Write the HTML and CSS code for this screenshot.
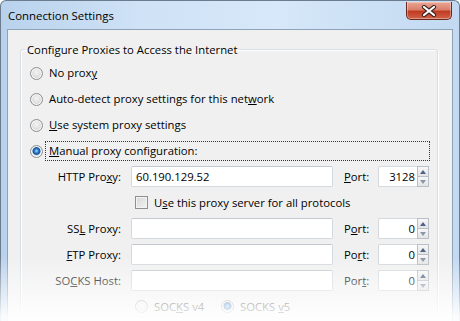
FILE: index.html
```html
<!DOCTYPE html>
<html lang="en">
<head>
  <meta charset="UTF-8" />
  <title>Connection Settings</title>
  <link rel="stylesheet" href="styles.css">
</head>
<body>
  <div class="window">
    <div class="titlebar">
      <span class="title">Connection Settings</span>
      <div class="close">
        <svg width="16" height="12" viewBox="0 0 16 12">
          <path d="M3 2 L13 10 M13 2 L3 10" stroke="#3b2320" stroke-width="4.2" stroke-linecap="round" fill="none"/>
          <path d="M3 2 L13 10 M13 2 L3 10" stroke="#ffffff" stroke-width="2.2" stroke-linecap="round" fill="none"/>
        </svg>
      </div>
    </div>

    <div class="client">
      <fieldset class="group">
        <legend>Configure Proxies to Access the Internet</legend>

        <div class="choice"><span class="radio"></span><span class="choice-label">No prox<u>y</u></span></div>
        <div class="choice"><span class="radio"></span><span class="choice-label">Auto-detect proxy settings for this net<u>w</u>ork</span></div>
        <div class="choice"><span class="radio"></span><span class="choice-label"><u>U</u>se system proxy settings</span></div>
        <div class="choice"><span class="radio on"></span><span class="choice-label focus"><u>M</u>anual proxy configuration:</span></div>

        <div class="proxy-grid">
          <span class="name">HTTP Pro<u>x</u>y:</span>
          <div class="field">60.190.129.52</div>
          <span class="port-label"><u>P</u>ort:</span>
          <div class="spin"><div class="num">3128</div><div class="arrows"><span class="up"></span><span class="down"></span></div></div>

          <div class="all"><span class="check"></span><span>U<u>s</u>e this proxy server for all protocols</span></div>

          <span class="name">SS<u>L</u> Proxy:</span>
          <div class="field"></div>
          <span class="port-label">P<u>o</u>rt:</span>
          <div class="spin"><div class="num">0</div><div class="arrows"><span class="up"></span><span class="down"></span></div></div>

          <span class="name"><u>F</u>TP Proxy:</span>
          <div class="field"></div>
          <span class="port-label">Po<u>r</u>t:</span>
          <div class="spin"><div class="num">0</div><div class="arrows"><span class="up"></span><span class="down"></span></div></div>

          <span class="name">SO<u>C</u>KS Host:</span>
          <div class="field"></div>
          <span class="port-label">Por<u>t</u>:</span>
          <div class="spin"><div class="num">0</div><div class="arrows"><span class="up"></span><span class="down"></span></div></div>

          <div class="socks">
            <span class="opt"><span class="radio"></span><span>SOC<u>K</u>S v4</span></span>
            <span class="opt"><span class="radio on"></span><span>SOCKS <u>v</u>5</span></span>
          </div>
        </div>
      </fieldset>
    </div>

    <!-- fondo desvanecido -->
    <div class="fade"></div>
  </div>
</body>
</html>
```

FILE: styles.css
```css
body {
  margin: 0;
  overflow: hidden;
  font-family: "Open Sans", "Noto Sans", sans-serif;
  font-size: 11.3px;
  color: #000;
}

.window {
  position: relative;
  width: 458px;
  height: 330px;
  border: 1px solid #6b7c8f;
  border-bottom: none;
  border-radius: 6px 6px 0 0;
  background: linear-gradient(to right, #b9d2ec, #cfe2f6 30%, #d6e8f9 60%, #c2d9f1);
  display: flex;
  flex-direction: column;
}

.titlebar {
  height: 28px;
  display: flex;
  justify-content: space-between;
  align-items: flex-start;
  padding: 0 7px;
}

.title {
  font-size: 11.4px;
  line-height: 29px;
  color: #000;
}

.close {
  margin-top: 1px;
  width: 44px;
  height: 17px;
  border: 1px solid #6a2a20;
  border-top: none;
  border-radius: 0 0 5px 5px;
  background: linear-gradient(#eba594, #d9806b 45%, #c23a22 55%, #cf6348);
  box-shadow: inset 0 0 0 1px rgba(255, 255, 255, 0.35);
  display: flex;
  justify-content: center;
  align-items: center;
}

.client {
  flex: 1;
  margin: 0 6px;
  background: #f0f0f0;
  border: 1px solid #8ea2b8;
  border-bottom: none;
  padding: 12px 14px 0 12px;
}

.group {
  margin: 0;
  padding: 3px 0 0 0;
  border: 1px solid #d5dfe5;
  border-radius: 3px;
  box-shadow: inset 1px 1px #fff, 1px 1px #fff;
}

.group legend {
  margin-left: 4px;
  padding: 0 2px;
  font-size: 11.3px;
  line-height: 15px;
}

.choice {
  height: 26px;
  display: flex;
  align-items: center;
  padding: 0 7px 0 9px;
}

.radio {
  flex: none;
  width: 11px;
  height: 11px;
  border-radius: 50%;
  border: 1px solid #8c8f93;
  background: radial-gradient(circle at 50% 40%, #f4f4f4, #d8d8d8 70%, #cfcfcf);
  box-shadow: inset 0 0 0 1px #f8f8f8;
}

.radio.on {
  background: radial-gradient(circle at 50% 45%, #a9dcff 0, #2a7fd0 2px, #1b4f8a 3.5px, #d8e6f2 4.5px, #e6e6e6 100%);
}

.choice-label {
  margin-left: 2px;
  padding: 0 3px;
  height: 18px;
  line-height: 18px;
  border: 1px dotted transparent;
}

.choice-label.focus {
  flex: 1;
  border-color: #333;
}

.proxy-grid {
  margin-top: 2px;
  display: grid;
  grid-template-columns: 100px 202px 25px 51px;
  grid-auto-rows: 21px;
  column-gap: 10px;
  row-gap: 5px;
  align-items: center;
}

.name {
  text-align: right;
  white-space: nowrap;
}

.port-label {
  white-space: nowrap;
  padding-left: 1px;
}

.field {
  height: 19px;
  border: 1px solid #d4d9de;
  border-top-color: #c3c9cf;
  border-radius: 2px;
  background: #fff;
  padding-left: 4px;
  line-height: 19px;
}

.spin {
  display: flex;
  height: 21px;
}

.num {
  width: 36px;
  border: 1px solid #d4d9de;
  border-right: none;
  border-radius: 2px 0 0 2px;
  background: #fff;
  text-align: right;
  padding-right: 2px;
  line-height: 19px;
}

.arrows {
  width: 12px;
  display: flex;
  flex-direction: column;
}

.arrows span {
  flex: 1;
  border: 1px solid #b9bfc6;
  background: linear-gradient(#f7f7f7, #e4e4e4);
  display: flex;
  justify-content: center;
  align-items: center;
}

.arrows .down {
  border-top: none;
}

.arrows .up::after {
  content: "";
  border: 3px solid transparent;
  border-top: none;
  border-bottom: 4px solid #4d6288;
}

.arrows .down::after {
  content: "";
  border: 3px solid transparent;
  border-bottom: none;
  border-top: 4px solid #8a96a8;
}

.check {
  flex: none;
  width: 11px;
  height: 11px;
  border: 1px solid #8e8f8f;
  background: linear-gradient(135deg, #d6d6d6, #f3f3f3);
  box-shadow: inset 0 0 0 1px #f4f4f4;
  margin-right: 6px;
}

.all, .socks {
  grid-column: 2 / 5;
  display: flex;
  align-items: center;
  padding-left: 4px;
}

.opt {
  width: 86px;
  display: flex;
  align-items: center;
  gap: 6px;
}

.fade {
  position: absolute;
  left: -1px;
  right: -1px;
  top: 256px;
  bottom: 0;
  background: linear-gradient(rgba(255, 255, 255, 0), rgba(255, 255, 255, 0.92) 80%);
}
```
